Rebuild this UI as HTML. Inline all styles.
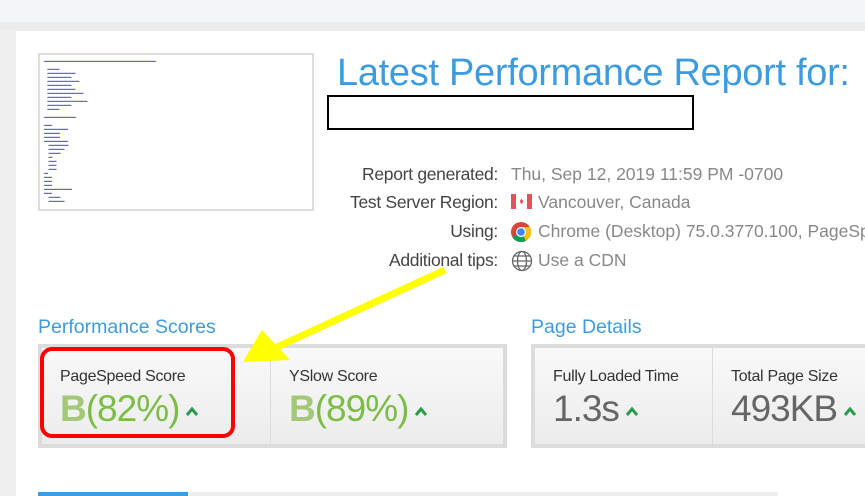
<!DOCTYPE html>
<html><head><style>
body{margin:0;width:865px;height:496px;overflow:hidden;background:#fff;font-family:"Liberation Sans",sans-serif;position:relative}
.a{position:absolute}
.lab{position:absolute;right:367px;color:#444;font-size:17.5px;white-space:nowrap;letter-spacing:-0.3px}
.val{position:absolute;left:511px;color:#888;font-size:17.5px;white-space:nowrap;letter-spacing:0px}
.box{position:absolute;background:#dcdcdc;top:344px;height:104px}
.cell{position:absolute;top:4px;height:96px;background:linear-gradient(#f9f9f9,#ececec)}
.ct{position:absolute;left:18px;top:20px;font-size:16px;color:#333;letter-spacing:-0.3px;white-space:nowrap}
.cv{position:absolute;left:18px;top:40px;font-size:37px;white-space:nowrap;letter-spacing:-1px}
.up{display:inline-block;width:14px;height:12px;margin-left:6px;vertical-align:middle}
</style></head><body>
<div class="a" style="left:0;top:0;width:865px;height:22px;background:#f4f5f7"></div>
<div class="a" style="left:0;top:22px;width:865px;height:9px;background:#ececec"></div>
<div class="a" style="left:0;top:31px;width:16px;height:465px;background:#f0f0f0"></div>
<div class="a" style="left:38px;top:53px;width:272px;height:154px;border:2px solid #ddd;background:#fff;font-size:4px;color:#66c;line-height:4px;overflow:hidden">
<div style="padding:4px">▬▬▬▬▬▬▬▬▬▬▬▬▬▬▬▬▬▬▬▬▬▬▬▬▬▬▬▬<br><br>&nbsp;&nbsp;&nbsp;▬▬▬<br>&nbsp;&nbsp;&nbsp;▬▬▬▬▬▬▬<br>&nbsp;&nbsp;&nbsp;▬▬▬▬▬▬<br>&nbsp;&nbsp;&nbsp;▬▬▬▬▬▬▬▬<br>&nbsp;&nbsp;&nbsp;▬▬▬▬▬▬<br>&nbsp;&nbsp;&nbsp;▬▬▬▬▬▬▬<br>&nbsp;&nbsp;&nbsp;▬▬▬▬▬▬▬▬▬<br>&nbsp;&nbsp;&nbsp;▬▬▬▬▬▬<br>&nbsp;&nbsp;&nbsp;▬▬▬▬▬▬▬▬▬▬<br>&nbsp;&nbsp;&nbsp;▬▬▬▬▬▬<br>&nbsp;&nbsp;&nbsp;▬▬▬<br><br>▬▬▬▬▬▬▬▬<br><br>▬▬<br>▬▬▬▬▬▬<br>▬▬▬▬<br>▬▬▬▬<br>▬▬▬▬▬▬<br>&nbsp;&nbsp;&nbsp;&nbsp;▬▬▬▬▬<br>&nbsp;&nbsp;&nbsp;&nbsp;▬▬▬▬<br>&nbsp;&nbsp;&nbsp;&nbsp;▬▬▬<br>&nbsp;&nbsp;&nbsp;&nbsp;▬<br>&nbsp;&nbsp;&nbsp;&nbsp;▬▬<br>&nbsp;&nbsp;&nbsp;&nbsp;▬▬<br>&nbsp;&nbsp;&nbsp;&nbsp;▬▬<br>▬<br>▬▬<br>▬▬<br>▬▬<br>▬▬▬▬▬▬▬<br>▬▬<br>&nbsp;&nbsp;&nbsp;&nbsp;▬▬▬<br>&nbsp;&nbsp;&nbsp;&nbsp;▬▬▬▬</div></div>
<div class="a" style="left:337px;top:52px;font-size:38px;color:#3d9be0;white-space:nowrap;letter-spacing:-0.3px">Latest Performance Report for:</div>
<div class="a" style="left:327px;top:95px;width:363px;height:31px;border:2px solid #000;background:#fff"></div>
<div class="lab" style="top:164px">Report generated:</div><div class="val" style="top:164px">Thu, Sep 12, 2019 11:59 PM -0700</div>
<div class="lab" style="top:192px">Test Server Region:</div><div class="val" style="top:192px;left:538px">Vancouver, Canada</div>
<div class="lab" style="top:221px">Using:</div><div class="val" style="top:221px;left:538px">Chrome (Desktop) 75.0.3770.100, PageSpeed</div>
<div class="lab" style="top:250px">Additional tips:</div><div class="val" style="top:250px;left:538px">Use a CDN</div>
<div class="a" style="left:511px;top:194px;width:21px;height:15px;background:#e8505b"><div style="position:absolute;left:5px;width:11px;height:15px;background:#fff;color:#e8505b;font-size:9px;text-align:center;line-height:15px">♦</div></div>
<svg class="a" style="left:510px;top:221px" width="22" height="22" viewBox="0 0 22 22"><circle cx="11" cy="11" r="10" fill="#db4437"/><path d="M11 11 L2.3 16 A10 10 0 0 0 16 19.7Z" fill="#0f9d58"/><path d="M11 11 L16 19.7 A10 10 0 0 0 20 6 L11 6Z" fill="#f4c20d"/><circle cx="11" cy="11" r="5" fill="#fff"/><circle cx="11" cy="11" r="3.8" fill="#4285f4"/></svg>
<svg class="a" style="left:511px;top:250px" width="22" height="22" viewBox="0 0 22 22" fill="none" stroke="#666" stroke-width="1.3"><circle cx="11" cy="11" r="9.5"/><ellipse cx="11" cy="11" rx="4.5" ry="9.5"/><path d="M1.5 11h19M3 6h16M3 16h16"/></svg>
<div class="a" style="left:38px;top:316px;font-size:19.5px;color:#3d9be0">Performance Scores</div>
<div class="a" style="left:531px;top:316px;font-size:19.5px;color:#3d9be0">Page Details</div>
<div class="box" style="left:38px;width:469px">
<div class="cell" style="left:4px;width:228px"><div class="ct">PageSpeed Score</div><div class="cv" style="color:#7cbd45"><b style="color:#a3c878">B</b><span style="font-weight:300">(82%)</span><svg class="up" viewBox="0 0 14 12"><path d="M2 10 L7 4 L12 10" fill="none" stroke="#2a9d4a" stroke-width="3"/></svg></div></div>
<div class="cell" style="left:233px;width:232px"><div class="ct">YSlow Score</div><div class="cv" style="color:#7cbd45"><b style="color:#a3c878">B</b><span>(89%)</span><svg class="up" viewBox="0 0 14 12"><path d="M2 10 L7 4 L12 10" fill="none" stroke="#2a9d4a" stroke-width="3"/></svg></div></div>
</div>
<div class="box" style="left:531px;width:340px">
<div class="cell" style="left:4px;width:177px"><div class="ct">Fully Loaded Time</div><div class="cv" style="color:#666">1.3s<svg class="up" viewBox="0 0 14 12"><path d="M2 10 L7 4 L12 10" fill="none" stroke="#2a9d4a" stroke-width="3"/></svg></div></div>
<div class="cell" style="left:182px;width:160px"><div class="ct">Total Page Size</div><div class="cv" style="color:#666">493KB<svg class="up" viewBox="0 0 14 12"><path d="M2 10 L7 4 L12 10" fill="none" stroke="#2a9d4a" stroke-width="3"/></svg></div></div>
</div>
<div class="a" style="left:40px;top:347px;width:187px;height:83px;border:4px solid #f00;border-radius:12px"></div>
<svg class="a" style="left:0;top:0" width="865" height="496"><line x1="445" y1="270" x2="275" y2="348" stroke="#ffff00" stroke-width="7"/><polygon points="243,362 262,330 290,360" fill="#ffff00"/></svg>
<div class="a" style="left:38px;top:492px;width:150px;height:4px;background:#3d9be0"></div>
<div class="a" style="left:188px;top:492px;width:590px;height:4px;background:#eee"></div>
</body></html>
